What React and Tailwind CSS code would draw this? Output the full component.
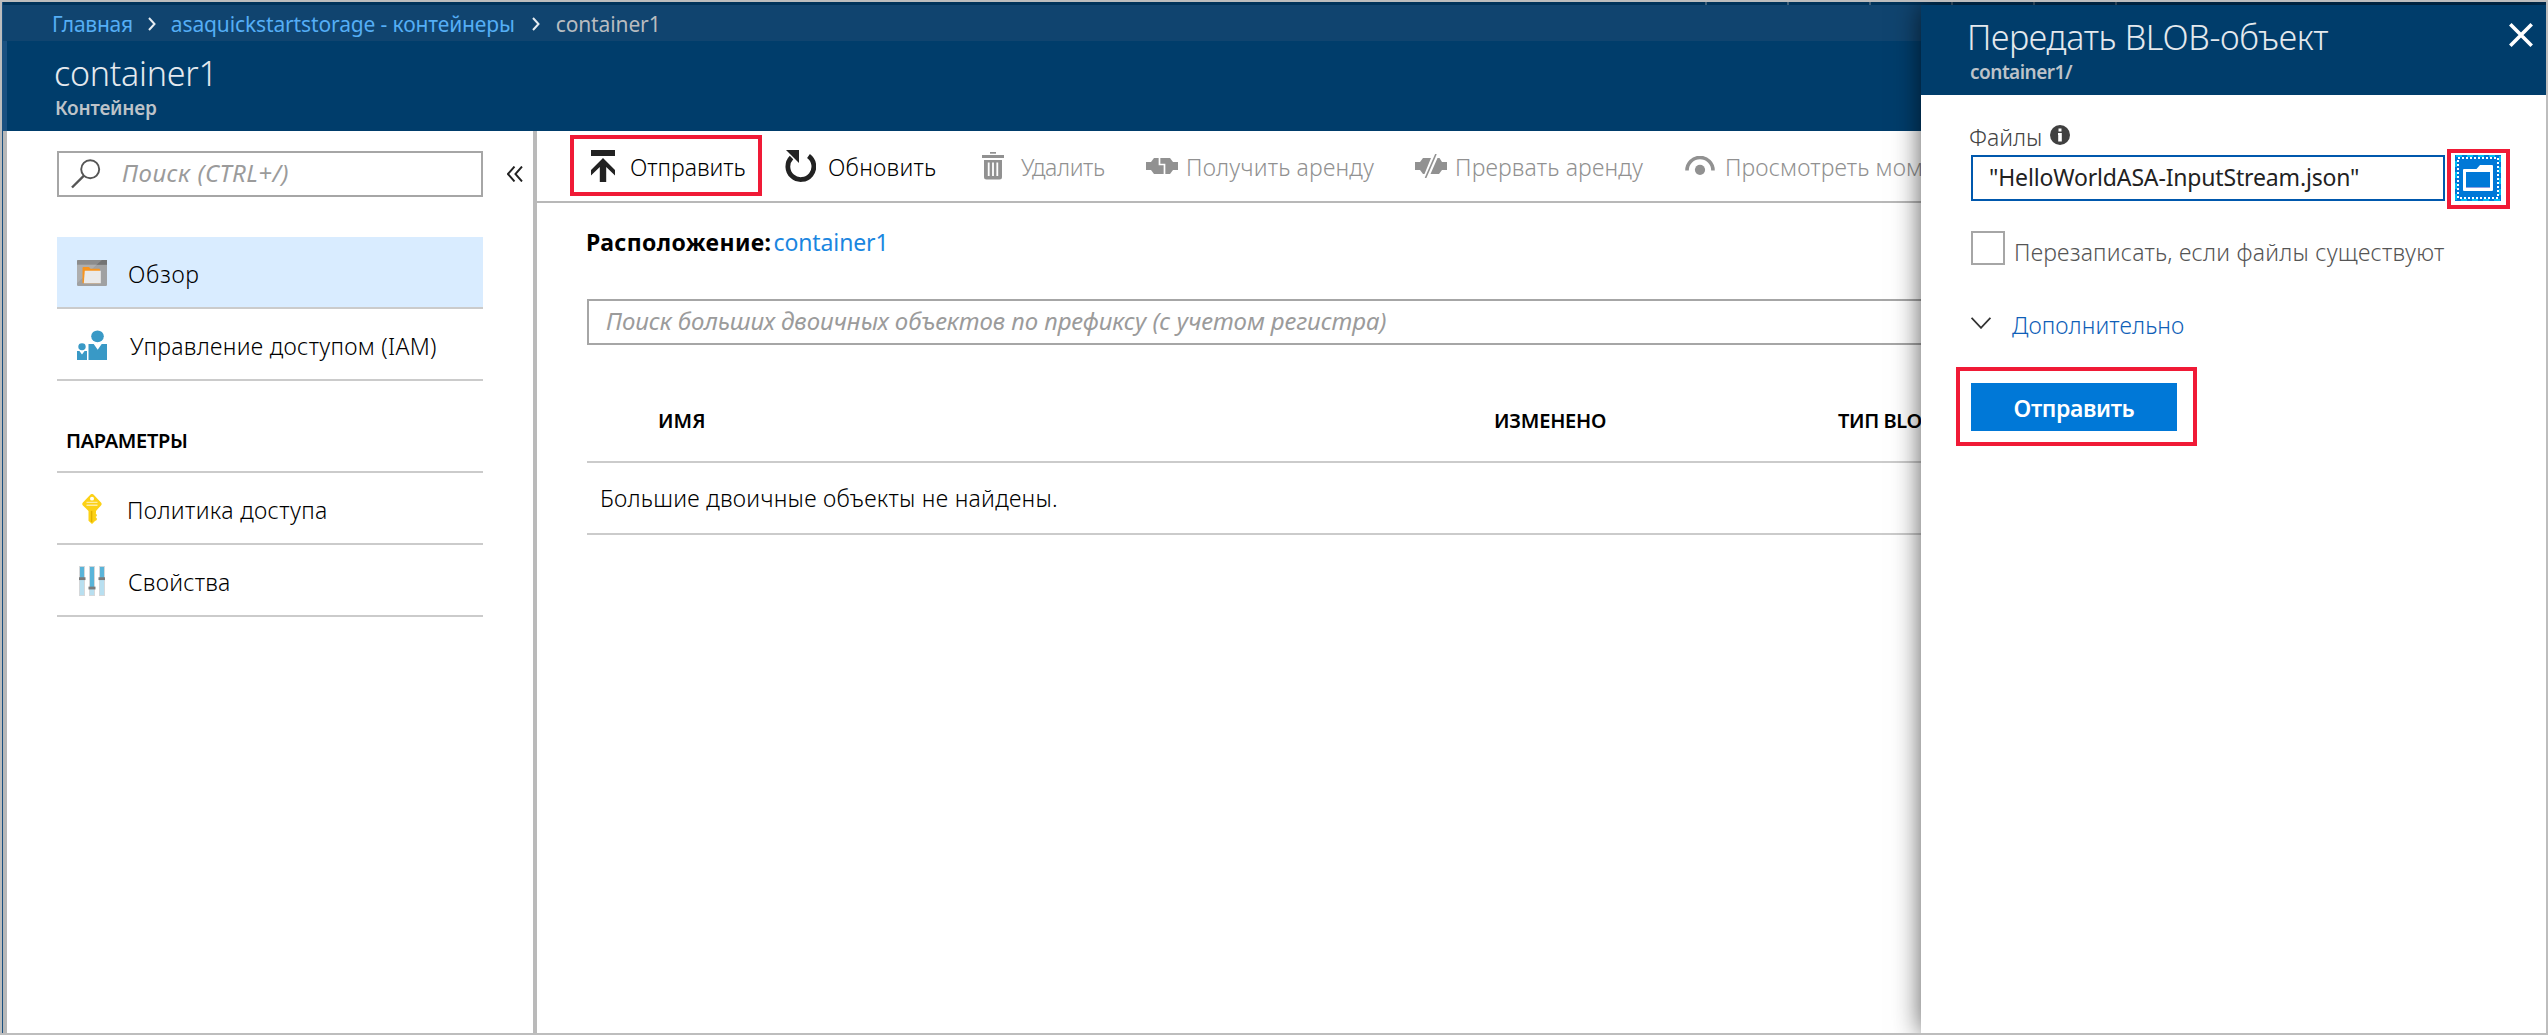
function T({ className = "", children }) {
  return <span className={`block whitespace-nowrap ${className}`}>{children}</span>;
}

function SearchIcon() {
  return (
    <svg className="h-[30px] w-[30px]" viewBox="0 0 30 30" fill="none" stroke="#555" strokeWidth="1.9">
      <circle cx="19.2" cy="10.3" r="9" />
      <path d="M12.7 16.8 1 28.5" strokeWidth="2.4" />
    </svg>
  );
}

function OverviewIcon() {
  return (
    <svg className="h-[26px] w-[30px]" viewBox="0 0 30 28" preserveAspectRatio="none">
      <rect width="30" height="28" rx="1.2" fill="#a0a1a2" />
      <path d="M1.2 0H30v5H0V1.2A1.2 1.2 0 0 1 1.2 0Z" fill="#8c8c8c" />
      <path d="M25 0h5v5H19.5Z" fill="#737373" />
      <path d="M0 5h19.5L0 25Z" fill="#b3b3b3" opacity=".7" />
      <path d="M5.500 8.500a1 1 0 0 1 1-1h5.500l1.500 2H22a1 1 0 0 1 1 1V25H5.500Z" fill="#f7941e" />
      <path d="M7.800 11.500h16V25H6.800Z" fill="#eaeaea" />
    </svg>
  );
}

function PeopleIcon() {
  return (
    <svg className="h-[30px] w-[30px]" viewBox="0 0 30 32" preserveAspectRatio="none" fill="#3999c6">
      <circle cx="20.5" cy="6.7" r="6.3" />
      <circle cx="5" cy="17.8" r="3.7" />
      <path d="M11.5 15h5.2l4 6 4-6H30v17H11.5Z" />
      <path d="M0 22.5h2.4L5 26l2.6-3.5H10V32H0Z" />
    </svg>
  );
}

function KeyIcon() {
  return (
    <svg className="h-[30px] w-[20px]" viewBox="0 0 20 32" preserveAspectRatio="none">
      <path d="M8.3 .8a2.400 2.400 0 0 1 3.400 0l7.300 8.200a2.500 2.500 0 0 1 0 3.200L14 18v1.800l-.2 1 1 1.200v1.400l-1.200 1.200 1.200 1.200v1.800L13 28.800 10 32l-3.500-3.600V18L.9 12.200a2.500 2.500 0 0 1 0-3.200Z" fill="#fcd116" />
      <circle cx="10" cy="5" r="2" fill="#fff" />
      <path d="M4.5 9h11M4.5 12h11" stroke="#fff" strokeWidth="1.4" opacity=".6" />
      <path d="M9.6 18v12" stroke="#e0b100" strokeWidth="1.5" />
    </svg>
  );
}

function SlidersIcon() {
  return (
    <svg className="h-[30px] w-[26px]" viewBox="0 0 26 32" preserveAspectRatio="none">
      {[[0, 13], [10, 23], [20, 13]].map(([x, y]) => (
        <g key={x}>
          <rect x={x} width="6" height="32" fill="#d5d8da" />
          <rect x={x + 1} y="1" width="4" height={y} fill="#59b4d9" />
          <rect x={x + 1} y={y} width="4" height={31 - y} fill="#b8dff0" />
          <rect x={x - 0.5} y={y - 1} width="7" height="3" fill="#7a7a7a" />
        </g>
      ))}
    </svg>
  );
}

function UploadIcon() {
  return (
    <svg className="h-[32px] w-[24px]" viewBox="0 0 24 32" fill="#222">
      <path d="M0 0h24v6H0ZM12 8 24 20v5.5L15.2 17v15H8.8V17L0 25.5V20Z" />
    </svg>
  );
}

function RefreshIcon() {
  return (
    <svg className="h-[32px] w-[31px]" viewBox="0 0 31 32">
      <path d="M23.5 6A13 13 0 1 1 6.5 7.5" fill="none" stroke="#222" strokeWidth="4.8" />
      <path d="M1 0h13v13Z" fill="#222" />
    </svg>
  );
}

function TrashIcon() {
  return (
    <svg className="h-[28px] w-[22px]" viewBox="0 0 22 28">
      <path d="M8 .8h6" stroke="#919191" strokeWidth="1.8" />
      <path d="M0 3h22v3H0ZM2 8h18v17a2.5 2.5 0 0 1-2.5 2.5h-13A2.5 2.5 0 0 1 2 25Z" fill="#919191" />
      <path d="M6.7 10.500V24M11 10.500V24M15.3 10.500V24" stroke="#fff" strokeWidth="1.8" />
    </svg>
  );
}

function LeaseIcon() {
  return (
    <svg className="h-[16px] w-[32px]" viewBox="0 0 32 16">
      <path d="M0 4h5l3-4h16l3 4h5v8h-5l-3 4H8l-3-4H0Z" fill="#919191" />
      <path d="M13.500 0v6.500h5V16" fill="none" stroke="#fff" strokeWidth="1.7" />
    </svg>
  );
}

function BreakLeaseIcon() {
  return (
    <svg className="h-[24px] w-[32px]" viewBox="0 0 32 24">
      <path d="M0 8h5l3-4h8L9.500 20H8l-3-4H0ZM22.500 4h2L27 8h5v8h-5l-3 4h-8.500Z" fill="#919191" />
      <path d="M21 0 10.5 24" stroke="#919191" strokeWidth="1.6" />
    </svg>
  );
}

function SnapshotIcon() {
  return (
    <svg className="h-[19px] w-[30px]" viewBox="0 0 30 19">
      <path d="M2 14.500a13 13 0 0 1 26 0" fill="none" stroke="#919191" strokeWidth="3.6" />
      <circle cx="15" cy="13.8" r="5.1" fill="#919191" />
    </svg>
  );
}

function Chevron() {
  return (
    <svg className="h-[14px] w-[8px]" viewBox="0 0 8 14" fill="none" stroke="#e6ecf1" strokeWidth="2">
      <path d="m1 1 5.500 6L1 13" />
    </svg>
  );
}

const NAV = "flex h-[72px] items-center border-b-2 border-[#cbcbcb] pl-[20px] pt-[2px]";
const NAVTXT = "mt-[2px] text-[23px] font-light leading-[30px] text-black";
const TOOL = "mt-[3px] text-[23px] font-light leading-[30px]";

function Sidebar() {
  return (
    <aside className="flex w-[530px] shrink-0 flex-col border-r-4 border-[#bababa] pt-[20px]">
      <div className="flex items-center pl-[50px]">
        <div className="flex h-[46px] w-[426px] items-center border-2 border-[#a6a6a6] pl-[12px]">
          <SearchIcon />
          <T className="-mt-[2px] ml-[21px] text-[24px] italic leading-[30px] tracking-[0.5px] text-[#9b9b9b]">Поиск (CTRL+/)</T>
        </div>
        <svg className="ml-[24px] h-[16px] w-[16px]" viewBox="0 0 16 16" fill="none" stroke="#222" strokeWidth="1.9">
          <path d="M7.500 .500.900 8l6.600 7.500M15 .500 8.400 8l6.600 7.500" />
        </svg>
      </div>
      <nav className="ml-[50px] mt-[40px] flex w-[426px] flex-col">
        <div className={`${NAV} bg-[#d9ecff]`}>
          <OverviewIcon />
          <T className={`ml-[21px] tracking-[0.7px] ${NAVTXT}`}>Обзор</T>
        </div>
        <div className={NAV}>
          <PeopleIcon />
          <T className={`ml-[23px] tracking-[0.3px] ${NAVTXT}`}>Управление доступом (IAM)</T>
        </div>
        <div className="flex h-[92px] items-end border-b-2 border-[#cbcbcb] pb-[15px] pl-[9px]">
          <T className="text-[20px] font-semibold leading-[30px] tracking-[-0.33px] text-black">ПАРАМЕТРЫ</T>
        </div>
        <div className={NAV}>
          <div className="flex w-[30px] justify-center"><KeyIcon /></div>
          <T className={`ml-[20px] tracking-[0.37px] ${NAVTXT}`}>Политика доступа</T>
        </div>
        <div className={NAV}>
          <div className="flex w-[30px] justify-center"><SlidersIcon /></div>
          <T className={`ml-[21px] tracking-[0.24px] ${NAVTXT}`}>Свойства</T>
        </div>
      </nav>
    </aside>
  );
}

function Toolbar() {
  return (
    <div className="flex h-[72px] shrink-0 items-start border-b-2 border-[#b8b8b8] pl-[33px] pt-[4px]">
      <div className="flex h-[61px] w-[192px] shrink-0 items-center border-4 border-[#f01a36] pl-[17px]">
        <UploadIcon />
        <T className={`ml-[15px] text-black ${TOOL}`}>Отправить</T>
      </div>
      <div className="flex h-[61px] items-center text-[#919191]">
        <div className="ml-[23px]"><RefreshIcon /></div>
        <div className="w-[166px] shrink-0"><T className={`ml-[12px] tracking-[0.27px] text-black ${TOOL}`}>Обновить</T></div>
        <TrashIcon />
        <div className="w-[142px] shrink-0"><T className={`ml-[17px] tracking-[-0.36px] ${TOOL}`}>Удалить</T></div>
        <LeaseIcon />
        <div className="w-[237px] shrink-0"><T className={`ml-[8px] tracking-[0.19px] ${TOOL}`}>Получить аренду</T></div>
        <BreakLeaseIcon />
        <div className="w-[238px] shrink-0"><T className={`ml-[8px] tracking-[0.18px] ${TOOL}`}>Прервать аренду</T></div>
        <SnapshotIcon />
        <T className={`ml-[10px] tracking-[0.13px] ${TOOL}`}>Просмотреть мом</T>
      </div>
    </div>
  );
}

function Main() {
  return (
    <main className="flex min-w-0 flex-1 flex-col overflow-hidden">
      <Toolbar />
      <div className="flex flex-col pl-[50px] pt-[24px]">
        <div className="-ml-[1px] flex gap-[2px] leading-[30px]">
          <T className="text-[23px] font-bold tracking-[0.4px] text-black">Расположение:</T>
          <T className="text-[23px] tracking-[-0.11px] text-[#1a86e0]">container1</T>
        </div>
        <div className="mt-[42px] flex h-[46px] items-center border-2 border-[#a6a6a6] pb-[2px] pl-[17px]">
          <T className="text-[24px] italic leading-[30px] tracking-[-0.1px] text-[#9b9b9b]">Поиск больших двоичных объектов по префиксу (с учетом регистра)</T>
        </div>
        <div className="mt-[46px] flex h-[72px] items-center border-b-2 border-[#cbcbcb] pb-[10px] pl-[71px] text-[20px] font-semibold leading-[30px] text-black">
          <div className="w-[836px]"><T>ИМЯ</T></div>
          <div className="w-[343px]"><T className="tracking-[-0.23px]">ИЗМЕНЕНО</T></div>
          <T className="ml-[1px] tracking-[-0.4px]">ТИП BLO</T>
        </div>
        <div className="flex h-[72px] items-center border-b-2 border-[#cbcbcb] pl-[13px]">
          <T className="text-[23px] font-light leading-[30px] tracking-[0.27px] text-black">Большие двоичные объекты не найдены.</T>
        </div>
      </div>
    </main>
  );
}

function FolderButton() {
  return (
    <div className="flex h-[60px] w-[63px] shrink-0 items-start border-4 border-[#f01a36] bg-white pl-[4px] pt-[2px]">
      <svg className="h-[46px] w-[46px]" viewBox="0 0 46 46">
        <rect width="46" height="46" fill="#0078d7" />
        <rect x="1" y="1" width="44" height="44" fill="none" stroke="#00bcf2" strokeWidth="2" strokeDasharray="6 5" />
        <rect x="3" y="3" width="40" height="40" fill="none" stroke="#fff" strokeWidth="2" strokeDasharray="2 2" />
        <path d="M9 14h12.500l3.500-4H37q1 0 1 1V35q0 1-1 1H9q-1 0-1-1V15q0-1 1-1Z" fill="#fff" />
        <rect x="11" y="17" width="24" height="16" fill="#0078d7" />
        <rect x="11" y="32" width="24" height="1" fill="#8f9ee0" />
      </svg>
    </div>
  );
}

function UploadPanel() {
  return (
    <section className="absolute bottom-0 right-0 top-[3px] flex w-[625px] flex-col bg-white shadow-[0_0_26px_rgba(0,0,0,0.65)]">
      <header className="flex h-[90px] shrink-0 justify-between bg-[#003d6b] pl-[46px] pr-[13px]">
        <div className="flex flex-col">
          <T className="mt-[10px] text-[34px] font-light leading-[44px] tracking-[-0.3px] text-[#e4e9ee]">Передать BLOB-объект</T>
          <T className="ml-[3px] text-[19px] font-semibold leading-[26px] tracking-[-0.5px] text-[#bdc3c9]">container1/</T>
        </div>
        <svg className="mt-[18px] h-[24px] w-[24px]" viewBox="0 0 24 24" stroke="#fff" strokeWidth="3.600">
          <path d="m1.300 1.300 21.400 21.400M22.700 1.300 1.300 22.700" />
        </svg>
      </header>
      <div className="flex flex-col pl-[50px]">
        <div className="-ml-[2px] mt-[27px] flex gap-[8px]">
          <T className="text-[23px] font-light leading-[30px] text-[#444]">Файлы</T>
          <svg className="mt-[3px] h-[20px] w-[20px]" viewBox="0 0 20 20">
            <circle cx="10" cy="10" r="10" fill="#404040" />
            <path d="M8.500 3.500h3v3h-3ZM8 8h3.800v8.500H8.200V10H8Z" fill="#fff" />
          </svg>
        </div>
        <div className="-mt-[3px] flex items-start gap-[2px]">
          <div className="mt-[6px] flex h-[46px] w-[474px] shrink-0 items-center border-2 border-[#0058ad] pb-[2px] pl-[16px]">
            <T className="text-[23px] leading-[30px] tracking-[-0.16px] text-[#222]">"HelloWorldASA-InputStream.json"</T>
          </div>
          <FolderButton />
        </div>
        <div className="mt-[22px] flex">
          <div className="h-[34px] w-[34px] shrink-0 border-2 border-[#a6a6a6]" />
          <T className="ml-[9px] mt-[6px] text-[23px] font-light leading-[30px] tracking-[0.22px] text-[#555]">Перезаписать, если файлы существуют</T>
        </div>
        <div className="mt-[43px] flex items-center">
          <svg className="mb-[5px] h-[12px] w-[20px]" viewBox="0 0 20 12" fill="none" stroke="#333" strokeWidth="1.800">
            <path d="m.600 .800 9.400 10 9.400-10" />
          </svg>
          <T className="ml-[21px] text-[23px] font-light leading-[30px] tracking-[0.09px] text-[#0f5fb8]">Дополнительно</T>
        </div>
      </div>
      <div className="ml-[35px] mt-[27px] flex h-[79px] w-[241px] items-start border-4 border-[#f01a36] pl-[11px] pt-[12px]">
        <div className="flex h-[48px] w-[206px] items-center justify-center bg-[#0078d7] pt-[2px]">
          <T className="text-[23px] font-semibold leading-[30px] tracking-[-0.38px] text-white">Отправить</T>
        </div>
      </div>
    </section>
  );
}

export default function App() {
  return (
    <div className="h-[1035px] w-[2548px] overflow-hidden border-2 border-[#bdbdbd] bg-white font-['Noto_Sans',sans-serif]">
      <div className="relative flex h-full flex-col overflow-hidden border-l border-[#1a5080]">
        <div className="flex h-[3px] shrink-0 gap-[80px] bg-[#00335a] pl-[1702px]">
          {[0, 1, 2, 3, 4, 5].map((i) => <i key={i} className="w-[2px] bg-[#3f5f78]" />)}
        </div>
        <div className="flex h-[36px] shrink-0 items-center bg-[#10446f] pl-[49px] pt-[2px] text-[21px] leading-[30px] text-[#55aef5]">
          <T className="tracking-[-0.25px]">Главная</T>
          <div className="ml-[15px] mr-[15px]"><Chevron /></div>
          <T className="tracking-[-0.13px]">asaquickstartstorage - контейнеры</T>
          <div className="ml-[17px] mr-[16px]"><Chevron /></div>
          <T className="tracking-[-0.12px] text-[#b8bcc0]">container1</T>
        </div>
        <div className="flex h-[90px] shrink-0 flex-col border-l-4 border-[#1a5080] bg-[#003d6b] pl-[48px]">
          <T className="-ml-[1px] mt-[10px] text-[34px] font-light leading-[44px] tracking-[-0.25px] text-[#e4e9ee]">container1</T>
          <T className="text-[19px] font-semibold leading-[26px] tracking-[-0.19px] text-[#bdc3c9]">Контейнер</T>
        </div>
        <div className="flex min-h-0 flex-1 border-l-4 border-[#b8b8b8]">
          <Sidebar />
          <Main />
        </div>
        <UploadPanel />
      </div>
    </div>
  );
}
